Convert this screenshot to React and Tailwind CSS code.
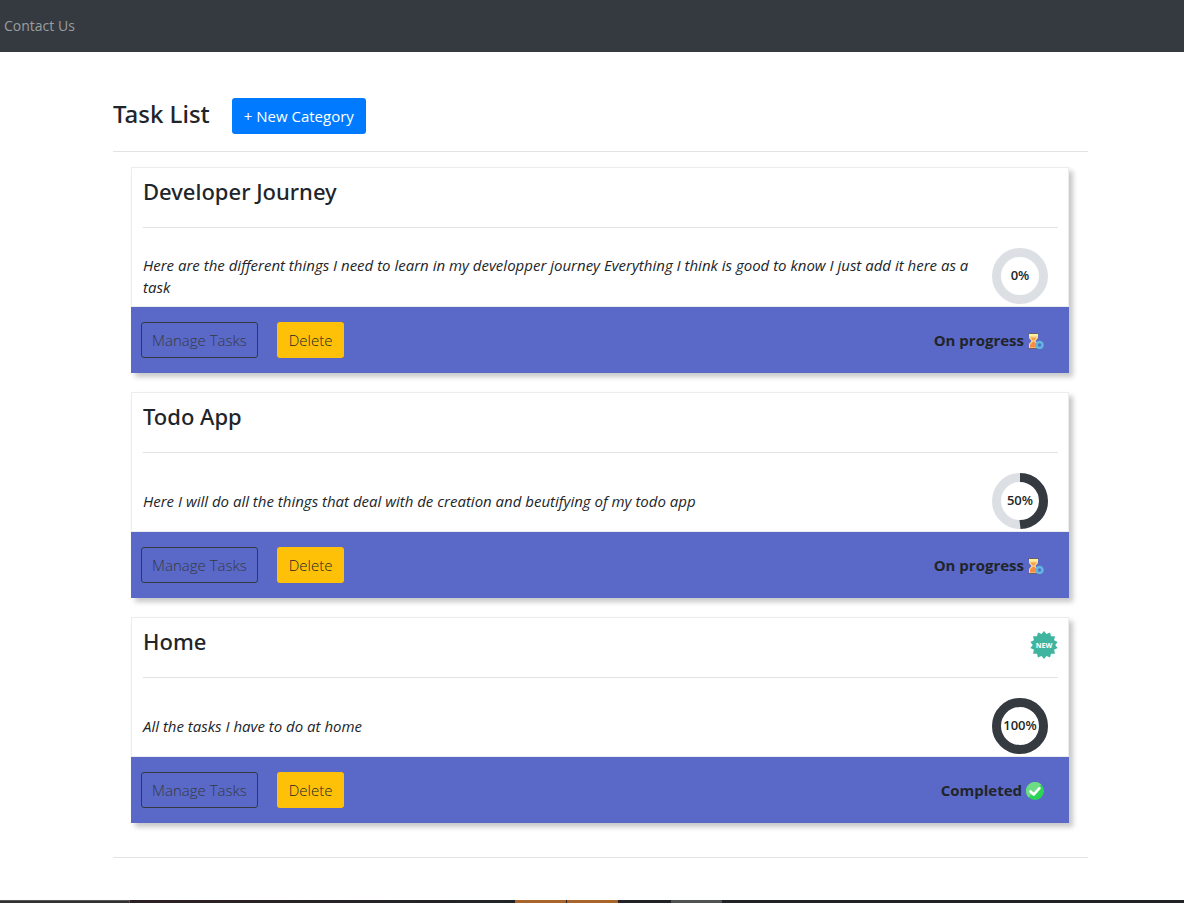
const categories = [
  {
    name: 'Developer Journey',
    description:
      'Here are the different things I need to learn in my developper journey Everything I think is good to know I just add it here as a task',
    percent: 0,
  },
  {
    name: 'Todo App',
    description: 'Here I will do all the things that deal with de creation and beutifying of my todo app',
    percent: 50,
  },
  { name: 'Home', description: 'All the tasks I have to do at home', percent: 100, isNew: true },
];

function starPoints(count, outer, inner) {
  return Array.from({ length: count * 2 }, (_, i) => {
    const radius = i % 2 === 0 ? outer : inner;
    const angle = (Math.PI * i) / count - Math.PI / 2;
    return `${(14 + radius * Math.cos(angle)).toFixed(2)},${(14 + radius * Math.sin(angle)).toFixed(2)}`;
  }).join(' ');
}

function NewBadge() {
  return (
    <svg className="size-7 shrink-0" viewBox="0 0 28 28" role="img" aria-label="New category">
      <polygon points={starPoints(14, 14, 11.2)} fill="#3fb59f" />
      <text
        x="14"
        y="16.5"
        textAnchor="middle"
        className="fill-white font-['Open_Sans',sans-serif] text-[7px] font-bold"
      >
        NEW
      </text>
    </svg>
  );
}

function HourglassIcon() {
  return (
    <svg className="mt-0.5 size-4 shrink-0" viewBox="0 0 16 16" aria-hidden="true">
      <path d="M1 1h9v4L7.500 8l2.500 3v4H1v-4l2.500-3L1 5z" fill="#fbd98b" />
      <path d="M2.500 4.500h6L6.500 7.500h-2z" fill="#f7a04a" />
      <path d="M5 8.500h1l3 3V14.500H2v-3z" fill="#f98c45" />
      <path d="M0 0h10.500v1.500H0z" fill="#67606f" />
      <path d="M1 1h9v2H1z" fill="#fff09c" />
      <path d="M0 15h10v1H0z" fill="#67606f" />
      <circle cx="11.500" cy="12" r="3" fill="#4b80ca" stroke="#62b5df" strokeWidth="2.600" />
      <circle cx="11.500" cy="12" r="1.200" fill="#5a68c8" />
    </svg>
  );
}

function CheckIcon() {
  return (
    <svg className="mt-0.5 size-[18px] shrink-0" viewBox="0 0 18 18" aria-hidden="true">
      <circle cx="9" cy="9" r="9" fill="#2bd457" />
      <path d="M2.600 15.400A9 9 0 0 1 15.400 2.600z" fill="#6edc85" />
      <path d="M4.500 9.500 7.700 12.500 13.500 6.200" fill="none" stroke="#fff" strokeWidth="2.600" strokeLinecap="round" strokeLinejoin="round" />
    </svg>
  );
}

function ProgressRing({ percent }) {
  return (
    <div className="grid size-14 shrink-0 place-items-center" role="img" aria-label={`${percent}% done`}>
      <svg className="col-start-1 row-start-1 size-14 -rotate-90" viewBox="0 0 56 56">
        <circle cx="28" cy="28" r="23.500" fill="none" stroke="#dcdfe4" strokeWidth="9" />
        {percent > 0 && (
          <circle
            cx="28"
            cy="28"
            r="23.500"
            fill="none"
            stroke="#343a40"
            strokeWidth="9"
            pathLength="100"
            strokeDasharray={`${percent} 100`}
          />
        )}
      </svg>
      <span className="col-start-1 row-start-1 text-[13px] font-semibold">{percent}%</span>
    </div>
  );
}

function CategoryCard({ name, description, percent, isNew }) {
  const completed = percent === 100;
  return (
    <article className="shadow-[4px_4px_5px_rgba(0,0,0,0.22)]">
      <div className="border border-[#ececee] pr-2.5 pl-[11px]">
        <header className="flex h-[60px] items-start justify-between border-b border-[#e2e3e4] pt-[7px]">
          <h2 className="font-['Noto_Sans','Open_Sans',sans-serif] text-[22px] leading-8 font-medium">{name}</h2>
          {isNew && (
            <div className="pt-1.5">
              <NewBadge />
            </div>
          )}
        </header>
        <div className="flex min-h-[78px] items-center justify-between gap-4 pt-5 pr-2.5 pb-0.5">
          <p className="text-[15px] leading-[22px] italic">{description}</p>
          <ProgressRing percent={percent} />
        </div>
      </div>
      <footer className="flex items-center justify-between bg-[#5a68c8] py-[15px] pr-[25px] pl-2.5">
        <div className="flex gap-[19px]">
          <button type="button" className="h-9 rounded-[3px] border border-[#343a40] px-2.5 font-light text-[#343a40]">
            Manage Tasks
          </button>
          <button type="button" className="h-9 rounded-[3px] bg-[#ffc107] px-3 font-light">
            Delete
          </button>
        </div>
        <div className="flex items-center gap-1 font-bold">
          <span>{completed ? 'Completed' : 'On progress'}</span>
          {completed ? <CheckIcon /> : <HourglassIcon />}
        </div>
      </footer>
    </article>
  );
}

export default function App() {
  return (
    <div className="flex min-h-screen flex-col bg-white font-['Open_Sans','Noto_Sans',sans-serif] text-[15px] text-[#212529]">
      <nav className="flex h-[52px] items-center bg-[#343a40] px-1">
        <a href="#contact" className="text-sm text-[#9a9da0]">
          Contact Us
        </a>
      </nav>
      <main className="pt-[46px] pr-24 pl-[113px]">
        <div className="flex items-start gap-[22px] border-b border-[#e2e3e4] pb-[17px]">
          <h1 className="font-['Noto_Sans','Open_Sans',sans-serif] text-2xl leading-8 font-medium">Task List</h1>
          <button type="button" className="h-9 rounded-[3px] bg-[#007bff] px-3 text-white">
            + New Category
          </button>
        </div>
        <div className="flex flex-col gap-[19px] border-b border-[#e2e3e4] pt-[15px] pr-[19px] pb-[34px] pl-[18px]">
          {categories.map((category) => (
            <CategoryCard key={category.name} {...category} />
          ))}
        </div>
      </main>
      <div className="mt-auto flex h-[3px] bg-[#202226]" aria-hidden="true">
        <div className="w-[130px] border-t border-r border-[#555] bg-[#323030]" />
        <div className="w-[385px] bg-linear-to-r from-[#2c2022] to-[#202428]" />
        <div className="w-[51px] bg-[#a8642a]" />
        <div className="ml-px w-[51px] bg-[#a8642a]" />
        <div className="ml-[53px] w-[51px] bg-[#505252]" />
      </div>
    </div>
  );
}
